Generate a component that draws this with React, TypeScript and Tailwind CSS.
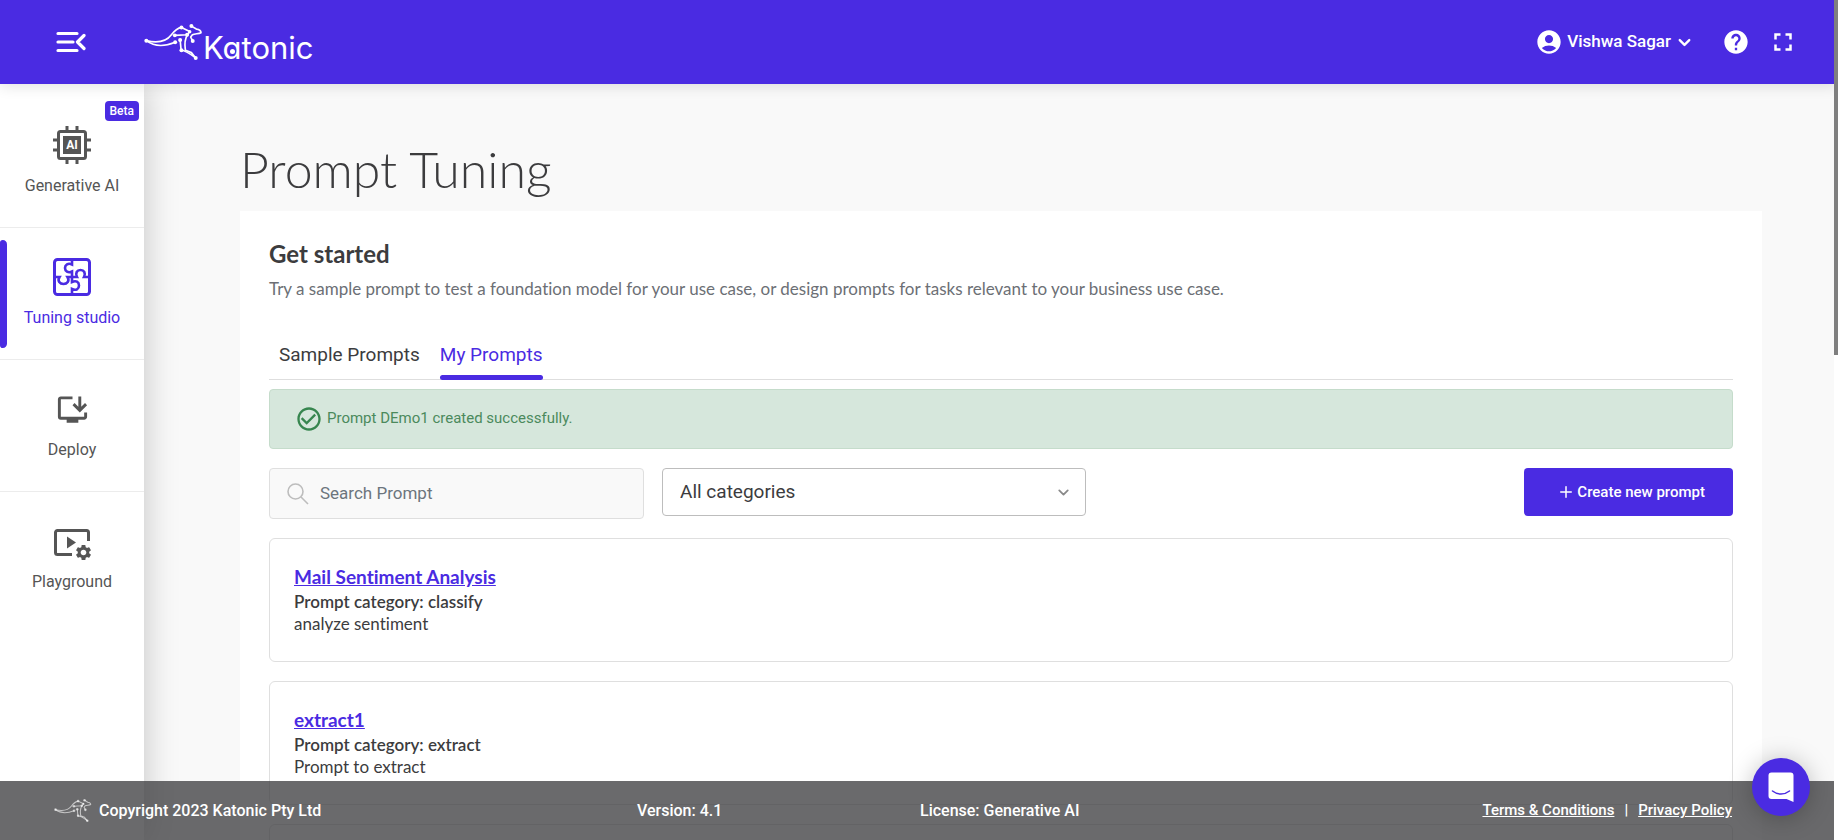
import { useState } from "react";
import type { ReactNode } from "react";
import {
  MdAccountCircle,
  MdCheckCircleOutline,
  MdFullscreen,
  MdHelp,
  MdOutlineInstallDesktop,
  MdSettings,
} from "react-icons/md";
import { ChevronDown, Plus } from "lucide-react";

const prompts = [
  { name: "Mail Sentiment Analysis", category: "classify", description: "analyze sentiment" },
  { name: "extract1", category: "extract", description: "Prompt to extract" },
];

function Kangaroo({ className }: { className?: string }) {
  return (
    <svg viewBox="430 68 178 114" className={className} fill="none" stroke="currentColor" strokeWidth="5" strokeLinecap="round" strokeLinejoin="round" aria-hidden="true">
      <path d="M437 121C480 131 500 120 512 104C522 91 531 83 543 81L568 93" />
      <path d="M437 121C462 140 492 139 524 126" />
      <path d="M523 105L561 103L568 93M573 77L588 86C596 87 602 90 602 97C594 101 584 99 576 103L571 110L577 122" />
      <path d="M539 118L542 150C556 151 566 158 586 173" />
      <path d="M561 103C550 121 553 136 555 150L573 157L586 173" />
      <g fill="currentColor" stroke="none">
        <circle cx="437" cy="121" r="6" />
        <circle cx="543" cy="81" r="6" />
        <circle cx="573" cy="77" r="6" />
        <circle cx="568" cy="94" r="5" />
        <circle cx="523" cy="105" r="6" />
        <circle cx="560" cy="103" r="6" />
        <circle cx="524" cy="126" r="6" />
        <circle cx="539" cy="119" r="6" />
        <circle cx="577" cy="122" r="6" />
        <circle cx="543" cy="150" r="6" />
        <circle cx="586" cy="173" r="6" />
      </g>
    </svg>
  );
}

function MenuFoldIcon() {
  return (
    <svg width="30" height="22" viewBox="0 0 30 22" fill="none" stroke="currentColor" strokeWidth="3.200" strokeLinecap="round" strokeLinejoin="round" aria-hidden="true">
      <path d="M2 2.500h19M2 11h15M2 19.500h19M28 4.500L21.500 11l6.500 6.500" />
    </svg>
  );
}

function ChipIcon() {
  return (
    <svg width="38" height="38" viewBox="0 0 38 38" fill="none" stroke="currentColor" aria-hidden="true">
      <path d="M14 0v6M24 0v6M14 32v6M24 32v6M0 14h6M0 24h6M32 14h6M32 24h6" strokeWidth="3" />
      <rect x="5.5" y="5.5" width="27" height="27" rx="2" strokeWidth="3" />
      <rect x="10" y="10" width="18" height="18" fill="currentColor" stroke="none" />
      <text x="19" y="23" textAnchor="middle" fontFamily="Roboto, sans-serif" fontWeight="700" fontSize="12" fill="#fff" stroke="none">AI</text>
    </svg>
  );
}

function PuzzleIcon() {
  return (
    <svg width="38" height="38" viewBox="0 0 38 38" fill="none" stroke="currentColor" strokeWidth="3" aria-hidden="true">
      <rect x="1.5" y="1.5" width="35" height="35" rx="3" />
      <path d="M19 2v4.500C15 4.500 12 7 12 10s3 5.500 7 3.500V24c4-2 7 0 7 3.500S23 33 19 31v5" strokeWidth="2.600" />
      <path d="M2 19h4.500C4 23 7 26 10.500 26S17 23 14.500 19H24c-2-4 0-7 3.500-7S33 15 31 19h5" strokeWidth="2.600" />
    </svg>
  );
}

function PlaygroundIcon() {
  return (
    <span className="relative mt-[7px] block h-8 w-9">
      <svg width="36" height="32" viewBox="0 0 36 32" fill="none" stroke="currentColor" strokeWidth="3" aria-hidden="true">
        <path d="M18 25.500H3.500a2 2 0 0 1-2-2v-20a2 2 0 0 1 2-2h29a2 2 0 0 1 2 2V12" />
        <path d="M13 7.500v12l9-6z" fill="currentColor" stroke="none" />
      </svg>
      <MdSettings size={19} className="absolute -right-[3px] -bottom-px" />
    </span>
  );
}

function SearchIcon() {
  return (
    <svg width="22" height="22" viewBox="0 0 22 22" fill="none" stroke="#bdbdbd" strokeWidth="1.600" aria-hidden="true">
      <circle cx="8.500" cy="8.500" r="7.500" />
      <path d="M14 14l7 7" />
    </svg>
  );
}

type NavItemProps = { icon: ReactNode; label: string; active?: boolean; badge?: string };

function NavItem({ icon, label, active, badge }: NavItemProps) {
  return (
    <li className="relative border-b border-[#ececec] last:border-b-0">
      {active && <span className="absolute top-3 left-0 h-27 w-[7px] rounded-r-md rounded-l-sm bg-[#4a2be2]" />}
      {badge && (
        <span className="absolute top-[5px] right-[5px] rounded bg-[#4a2be2] px-[5px] text-[12px] leading-5 font-medium text-white">
          {badge}
        </span>
      )}
      <a
        href="#"
        aria-current={active ? "page" : undefined}
        className={`flex h-[131px] flex-col items-center pt-[30px] text-[16px] leading-5 ${active ? "text-[#4a2be2]" : "text-[#555]"}`}
      >
        <span className="flex h-[38px] items-center">{icon}</span>
        <span className="mt-3">{label}</span>
      </a>
    </li>
  );
}

function Header() {
  return (
    <header className="relative z-20 flex h-21 shrink-0 items-center justify-between bg-[#4a2be2] pr-10 pl-14 text-white shadow-[0_2px_14px_rgba(0,0,0,0.12)]">
      <div className="flex items-center">
        <button type="button" aria-label="Collapse menu">
          <MenuFoldIcon />
        </button>
        <a href="#" className="ml-[58px] flex items-center">
          <Kangaroo className="h-[38px] w-[59px]" />
          <span className="relative mt-3 font-[Inter,sans-serif] text-[31px] leading-8 [font-feature-settings:'cv11']">
            Katonic
            <span className="absolute top-[17px] left-[27px] size-[5px] rounded-full bg-white" />
          </span>
        </a>
      </div>
      <div className="flex items-center">
        <button type="button" className="flex items-center text-[17px] font-medium">
          <MdAccountCircle size={28} />
          <span className="ml-1">Vishwa Sagar</span>
          <ChevronDown size={19} strokeWidth={3} className="ml-1" />
        </button>
        <button type="button" aria-label="Help" className="ml-7">
          <MdHelp size={28} />
        </button>
        <button type="button" aria-label="Full screen" className="ml-[18px]">
          <MdFullscreen size={30} />
        </button>
      </div>
    </header>
  );
}

function Footer() {
  return (
    <footer className="absolute inset-x-0 bottom-0 z-30 mr-1 grid h-[59px] grid-cols-[583fr_283fr_812fr] items-center bg-[#404043]/78 pr-[102px] pl-[54px] text-[16px] font-medium text-white">
      <div className="flex items-center">
        <Kangaroo className="h-[25px] w-[38px] text-white/60" />
        <span className="ml-[7px]">Copyright 2023 Katonic Pty Ltd</span>
      </div>
      <span>Version: 4.1</span>
      <div className="flex items-center justify-between">
        <span>License: Generative AI</span>
        <span className="flex gap-[10px] text-[15px]">
          <a href="#" className="underline">Terms &amp; Conditions</a>
          <span>|</span>
          <a href="#" className="underline">Privacy Policy</a>
        </span>
      </div>
    </footer>
  );
}

export default function App() {
  const [tab, setTab] = useState("My Prompts");
  const [query, setQuery] = useState("");

  return (
    <div className="relative flex h-screen flex-col overflow-hidden bg-[#f9f9f9] font-[Roboto,sans-serif] text-[#3c3c3e]">
      <Header />

      <div className="flex min-h-0 flex-1">
        <nav className="z-10 w-36 shrink-0 bg-white pt-3 shadow-[0_0_32px_rgba(0,0,0,0.22)]">
          <ul>
            <NavItem icon={<ChipIcon />} label="Generative AI" badge="Beta" />
            <NavItem icon={<PuzzleIcon />} label="Tuning studio" active />
            <NavItem icon={<MdOutlineInstallDesktop size={35} />} label="Deploy" />
            <NavItem icon={<PlaygroundIcon />} label="Playground" />
          </ul>
        </nav>

        <main className="min-w-0 flex-1 overflow-hidden pt-[55px] pr-[76px] pl-24">
          <h1 className="mb-3 font-[Lato,sans-serif] text-[50px] leading-[60px] font-light">Prompt Tuning</h1>

          <section className="bg-white px-7 pt-[27px] pb-20">
            <div className="px-px">
              <h2 className="font-[Lato,sans-serif] text-[24px] leading-8 font-bold">Get started</h2>
              <p className="mt-[5px] font-[Lato,sans-serif] text-[17px] leading-7 text-[#6c6f75] [font-variant-ligatures:none]">
                Try a sample prompt to test a foundation model for your use case, or design prompts for tasks relevant to your business use case.
              </p>

              {/* Tabs */}
              <div role="tablist" className="mt-[35px] flex gap-5 border-b border-[#dedede] px-[10px] text-[19px] leading-7">
                {["Sample Prompts", "My Prompts"].map((name) => (
                  <button
                    key={name}
                    type="button"
                    role="tab"
                    aria-selected={tab === name}
                    onClick={() => setTab(name)}
                    className={`relative h-[41px] pb-2 ${tab === name ? "text-[#4a2be2]" : ""}`}
                  >
                    {name}
                    {tab === name && <span className="absolute inset-x-0 -bottom-px h-[5px] rounded-full bg-[#4a2be2]" />}
                  </button>
                ))}
              </div>

              <div role="status" className="mt-[9px] flex h-15 items-center gap-1 rounded border border-[#c5dccb] bg-[#d6e7dc] px-[25px] text-[15px] text-[#4b8a5c]">
                <MdCheckCircleOutline size={28} className="text-[#37864f]" />
                <span className="pb-[2px]">Prompt DEmo1 created successfully.</span>
              </div>

              {/* Filters */}
              <div className="mt-[19px] flex items-start">
                <label className="flex h-[51px] w-[375px] items-center rounded border border-[#dfdfdf] bg-[#f9f9f9] pl-[17px]">
                  <SearchIcon />
                  <input
                    type="text"
                    aria-label="Search Prompt"
                    placeholder="Search Prompt"
                    value={query}
                    onChange={(e) => setQuery(e.target.value)}
                    className="ml-[11px] min-w-0 flex-1 bg-transparent text-[17px] outline-none placeholder:text-[#6c757d]"
                  />
                </label>
                <div className="relative ml-[18px] w-[424px]">
                  <select aria-label="Category" className="h-12 w-full appearance-none rounded border border-[#bdbdbd] bg-white px-[17px] text-[19px]">
                    <option>All categories</option>
                    <option>classify</option>
                    <option>extract</option>
                  </select>
                  <ChevronDown size={17} strokeWidth={2.5} className="pointer-events-none absolute top-4 right-[14px] text-[#8a8a8a]" />
                </div>
                <button type="button" className="ml-auto flex h-12 w-[209px] items-center justify-end gap-[2px] rounded bg-[#4a2be2] pr-7 text-[15px] font-medium text-white">
                  <Plus size={18} strokeWidth={2} />
                  Create new prompt
                </button>
              </div>

              <ul className="mt-[19px] flex flex-col gap-[19px] font-[Lato,sans-serif] [font-variant-ligatures:none]">
                {prompts.map((prompt) => (
                  <li key={prompt.name} className="h-31 rounded-md border border-[#dfdfdf] px-6 pt-6">
                    <a href="#" className="block w-fit text-[19px] leading-7 font-bold text-[#4a2be2] underline">{prompt.name}</a>
                    <p className="text-[17px] leading-[22px] font-semibold">Prompt category: {prompt.category}</p>
                    <p className="text-[17px] leading-[22px]">{prompt.description}</p>
                  </li>
                ))}
                <li className="h-31 rounded-md border border-[#dfdfdf]" />
              </ul>
            </div>
          </section>
        </main>
      </div>

      <Footer />

      {/* Scrollbar */}
      <div className="absolute inset-y-0 right-0 z-40 w-1 bg-white">
        <div className="h-[355px] bg-[#7f7f7f]" />
      </div>

      {/* Chat launcher */}
      <button
        type="button"
        aria-label="Open chat"
        className="absolute right-7 bottom-6 z-50 flex size-[58px] items-center justify-center rounded-full bg-[#4a2be2] shadow-[0_2px_24px_rgba(0,0,0,0.25)]"
      >
        <svg width="26" height="30" viewBox="0 0 26 30" aria-hidden="true">
          <path d="M3.500 0.500h19a3 3 0 0 1 3 3V30L18.500 27h-15a3 3 0 0 1-3-3V3.500a3 3 0 0 1 3-3z" fill="#fff" />
          <path d="M4.500 19c5 4 12 4 17 0" fill="none" stroke="#4a2be2" strokeWidth="1.500" strokeLinecap="round" />
        </svg>
      </button>
    </div>
  );
}
